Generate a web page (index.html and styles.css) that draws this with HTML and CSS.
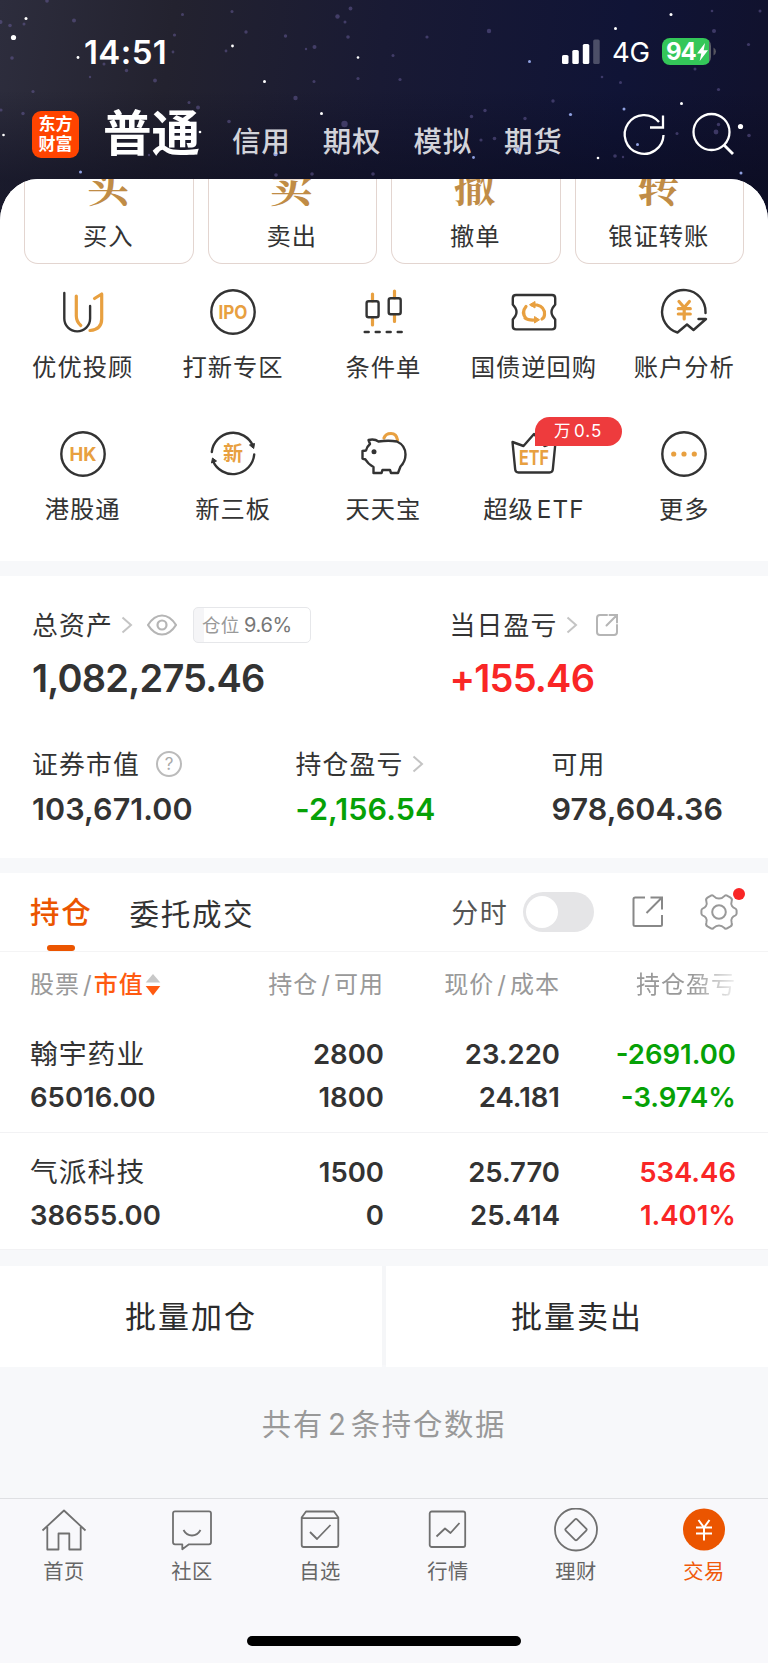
FILE: index.html
```html
<!DOCTYPE html>
<html lang="zh-CN">
<head>
<meta charset="utf-8">
<title>交易</title>
<link rel="stylesheet" href="styles.css">
</head>
<body>
<div class="screen">
  <header class="header">
    <svg class="stars" width="768" height="230" viewBox="0 0 768 230">
      <g fill="#fff">
        <circle cx="13.500" cy="37.500" r="2.600"/><circle cx="26" cy="18.500" r="1.500"/><circle cx="78" cy="57.500" r="1.400"/><circle cx="232.500" cy="46" r="1.400"/><circle cx="264.500" cy="81.500" r="1.500"/><circle cx="358" cy="57.500" r="1.300"/><circle cx="321.500" cy="113.500" r="1.500"/><circle cx="3.500" cy="135" r="1.300"/><circle cx="200" cy="132" r="1.300"/><circle cx="671" cy="14.500" r="1.500"/><circle cx="615.500" cy="28.500" r="1.500"/><circle cx="681.500" cy="103.500" r="1.500"/><circle cx="740.500" cy="126.500" r="2.600"/><circle cx="598" cy="158" r="1.300"/>
      </g>
      <g fill="#8fa0e0">
        <circle cx="80.500" cy="172" r="1.500"/><circle cx="529.500" cy="61.500" r="1.500"/><circle cx="570.500" cy="114.500" r="1.600"/><circle cx="624" cy="109" r="1.500"/><circle cx="637.500" cy="144.500" r="1.500"/><circle cx="473.500" cy="157.500" r="1.400"/><circle cx="741" cy="173" r="1.500"/><circle cx="275.500" cy="154" r="2.200"/><circle cx="518" cy="149" r="2.200"/>
      </g>
      <g fill="#6a5f9c" opacity=".5">
        <circle cx="0.500" cy="22" r="2"/><circle cx="10" cy="25.500" r="1.800"/><circle cx="24" cy="24" r="1.500"/><circle cx="47" cy="1" r="1.800"/><circle cx="74" cy="20.500" r="2"/><circle cx="12" cy="58" r="1.800"/><circle cx="104" cy="64" r="1.500"/><circle cx="126.500" cy="70.500" r="1.700"/><circle cx="155" cy="80.500" r="1.900"/><circle cx="90" cy="77" r="1.200"/><circle cx="33" cy="91.500" r="1.600"/><circle cx="174.500" cy="35" r="1.600"/><circle cx="173" cy="52" r="1.400"/><circle cx="182.500" cy="14.500" r="1.500"/><circle cx="246" cy="32" r="1.700"/><circle cx="232" cy="11.500" r="1.500"/><circle cx="285.500" cy="36" r="1.700"/><circle cx="314.500" cy="47" r="2"/><circle cx="306" cy="49" r="1.200"/><circle cx="226" cy="51" r="1.400"/><circle cx="337.500" cy="16.500" r="2.200"/><circle cx="345" cy="22" r="1.500"/><circle cx="350.500" cy="8.500" r="1.900"/><circle cx="348" cy="37" r="1.800"/><circle cx="358" cy="78.500" r="1.600"/><circle cx="314" cy="81.500" r="1.500"/><circle cx="295.500" cy="98" r="2.200"/><circle cx="344.500" cy="124" r="3.200"/><circle cx="198" cy="107.500" r="2"/><circle cx="189" cy="102.500" r="1.500"/><circle cx="229" cy="121.500" r="1.800"/><circle cx="23" cy="113.500" r="1.700"/><circle cx="1" cy="110" r="1.600"/><circle cx="427" cy="37" r="1.600"/><circle cx="489" cy="31" r="2.200"/><circle cx="393" cy="55.500" r="1.500"/><circle cx="400" cy="79.500" r="1.600"/><circle cx="553" cy="101" r="1.700"/><circle cx="485" cy="110.500" r="1.700"/><circle cx="471.500" cy="116.500" r="1.700"/><circle cx="525" cy="118.500" r="1.700"/><circle cx="481" cy="140" r="1.600"/><circle cx="494.500" cy="138.500" r="1.800"/><circle cx="714" cy="31" r="2"/><circle cx="748.500" cy="44.500" r="1.600"/><circle cx="712" cy="11" r="1.300"/><circle cx="695" cy="69" r="1.500"/><circle cx="718.500" cy="89.500" r="1.600"/><circle cx="620.500" cy="82.500" r="1.500"/><circle cx="602" cy="77" r="1.300"/><circle cx="718.500" cy="124.500" r="1.700"/><circle cx="716" cy="132" r="2.400"/><circle cx="749" cy="135.500" r="1.800"/><circle cx="677" cy="133.500" r="1.500"/><circle cx="615" cy="156" r="1.800"/><circle cx="623" cy="157" r="1.200"/><circle cx="276" cy="175" r="1.800"/><circle cx="312" cy="174" r="1.800"/><circle cx="373" cy="174" r="1.800"/><circle cx="149" cy="155" r="1.200"/><circle cx="760" cy="11" r="1.500"/>
      </g>
    </svg>
    <div class="status">
      <span class="clock">14:51</span>
      <svg class="signal" width="40" height="26" viewBox="0 0 40 26" fill="#fff">
        <rect x="2" y="16" width="6.500" height="9" rx="1.600"/><rect x="12.300" y="11" width="6.500" height="14" rx="1.600"/><rect x="22.800" y="5" width="6.500" height="20" rx="1.600"/><rect x="33.200" y="0.500" width="6.500" height="24.500" rx="1.600" opacity=".25"/>
      </svg>
      <span class="net">4G</span>
      <span class="battery"><b>94</b><svg width="13" height="20" viewBox="0 0 12 20"><path d="M8.500 1 0.500 11.500h4.300L3.200 19 11.500 8.200H7.200z" fill="#fff"/></svg></span>
      <svg class="nub" width="3" height="9" viewBox="0 0 3 9"><path d="M.5 0.500q2.500 1.500 2.500 4t-2.500 4z" fill="#55555f"/></svg>
    </div>
    <nav class="accounts">
      <div class="logo"><span>东方</span><span>财富</span></div>
      <span class="account current">普通</span>
      <span class="account">信用</span>
      <span class="account">期权</span>
      <span class="account">模拟</span>
      <span class="account">期货</span>
      <svg class="tools" width="120" height="48" viewBox="0 0 120 48" fill="none" stroke="#fff" stroke-width="2.300">
        <path d="M48.500 25a19.400 19.400 0 1 1-4.500-13M48 5.500v12H35"/>
        <circle cx="96.500" cy="22" r="18"/><path d="M109 35l9 9" stroke-width="2.800"/>
      </svg>
    </nav>
  </header>

  <main class="sheet">
    <section class="panel shortcuts">
      <div class="cards">
        <div class="card"><span class="seal">买</span><span class="label">买入</span></div>
        <div class="card"><span class="seal">卖</span><span class="label">卖出</span></div>
        <div class="card"><span class="seal">撤</span><span class="label">撤单</span></div>
        <div class="card"><span class="seal">转</span><span class="label">银证转账</span></div>
      </div>
      <div class="grid">
        <div class="cell">
          <svg class="ico" viewBox="0 0 50 50"><path class="k" d="M6.300 6v25.500a12.900 12.900 0 0 0 25.800 0V19"/><path class="g" d="M18.300 9v20q0 5.500 4.500 9.500M36.500 11.500L43.700 7v25q0 10.500-11.700 11.500"/></svg>
          <span class="label">优优投顾</span>
        </div>
        <div class="cell">
          <svg class="ico" viewBox="0 0 50 50"><circle class="k" cx="25" cy="25" r="21.700"/><text class="gt" x="25" y="31.800" font-size="19" textLength="29" lengthAdjust="spacingAndGlyphs">IPO</text></svg>
          <span class="label">打新专区</span>
        </div>
        <div class="cell">
          <svg class="ico" viewBox="0 0 50 50"><path class="g" d="M14.500 7v7M14.500 32v6M36.500 4v7M36.500 28v6.500"/><rect class="k" x="8.600" y="14.300" width="12" height="16" rx="2"/><rect class="k" x="30.700" y="11.300" width="12" height="16" rx="2"/><path class="k" d="M6.700 45h4M17.700 45h4M28.700 45h4M39.700 45h4"/></svg>
          <span class="label">条件单</span>
        </div>
        <div class="cell">
          <svg class="ico" viewBox="0 0 50 50"><path class="k" d="M7 8h36q3.200 0 3.200 3.200v6.300l-2.600 3.500q-2.200 4 0 8l2.600 3.500v6.700q0 3.200-3.200 3.200H7q-3.200 0-3.200-3.200v-6.700l2.600-3.500q2.200-4 0-8l-2.600-3.500v-6.300Q3.800 8 7 8z"/><path class="g" d="M17 31.500q-5-6 0-12M23 18h5q8 2 7.500 9.500 0 3-2.500 4.500M16 31q3 2.500 10 2"/><path fill="#e8a040" stroke="#e8a040" stroke-linejoin="round" d="M26 14.500v6.500l-5.500-3.300zM25.500 29.500v6.500l5-3.200z"/></svg>
          <span class="label">国债逆回购</span>
        </div>
        <div class="cell">
          <svg class="ico" viewBox="0 0 50 50"><path class="k" d="M46.500 26v-1A21.700 21.700 0 1 0 18.500 45.500l9.500-8 6.500 5.500 12.500-11h-7.500"/><path class="g" d="M20 14.500l5.200 6 5.200-6M25.200 20.500v11.500M19.300 21.700h12M19.300 27h12"/></svg>
          <span class="label">账户分析</span>
        </div>
        <div class="cell">
          <svg class="ico" viewBox="0 0 50 50"><circle class="k" cx="25" cy="25" r="21.700"/><text class="gt" x="25" y="31.800" font-size="19" textLength="27" lengthAdjust="spacingAndGlyphs">HK</text></svg>
          <span class="label">港股通</span>
        </div>
        <div class="cell">
          <svg class="ico" viewBox="0 0 50 50"><path class="k" d="M3.800 23A21.500 21.500 0 0 1 45 17M46.200 25.500A21.500 21.500 0 0 1 5 32"/><path fill="#333" stroke="#333" d="M41.500 16l5-1.500-.8 5zM8.500 32l-5 2 1-5z"/><text class="gt" x="25" y="32" font-size="20">新</text></svg>
          <span class="label">新三板</span>
        </div>
        <div class="cell">
          <svg class="ico" viewBox="0 0 50 50"><path class="g" d="M26 9q1.500-4.500 7-4.500T39.500 11"/><path class="k" d="M10.500 11q6-1.500 10 1.500 10-1.500 18.500 0 8.500 4 8.500 13 0 7-5 12l-2.500 6.500h-7l-1-3h-7.500l-1 3h-8v-6Q10 35 7.500 30.500l-3-1V22l3.500-.5q1-4 4-6.500z"/><circle cx="16" cy="22.800" r="2.500" fill="#333"/></svg>
          <span class="label">天天宝</span>
        </div>
        <div class="cell">
          <svg class="ico" viewBox="0 0 50 50"><path class="k" d="M3.500 13l11 4L25 5l10.500 12 11-4-2.700 27.500q-.3 3-3.300 3h-31q-3 0-3.300-3z"/><text class="gt" x="25" y="36" font-size="20" textLength="30" lengthAdjust="spacingAndGlyphs">ETF</text></svg>
          <span class="badge">万<i>0.5</i></span>
          <span class="label">超级<i class="latin">ETF</i></span>
        </div>
        <div class="cell">
          <svg class="ico" viewBox="0 0 50 50"><circle class="k" cx="25" cy="25" r="21.700"/><g fill="#e8a040"><circle cx="14.700" cy="25" r="2.600"/><circle cx="25" cy="25" r="2.600"/><circle cx="35.300" cy="25" r="2.600"/></g></svg>
          <span class="label">更多</span>
        </div>
      </div>
    </section>

    <section class="panel assets">
      <div class="totals">
        <div class="stat">
          <div class="stat-name"><span class="caption">总资产</span>
            <svg class="chev" width="12" height="18" viewBox="0 0 12 18"><path d="M1.500 1.500L10 9l-8.500 7.500"/></svg>
            <svg class="eye" width="30" height="22" viewBox="0 0 30 22"><path d="M1 11Q7 1.500 15 1.500T29 11Q23 20.500 15 20.500T1 11z"/><circle cx="15" cy="11" r="4.500"/></svg>
            <span class="ratio">仓位 <i>9.6%</i></span>
          </div>
          <div class="big">1,082,275.46</div>
        </div>
        <div class="stat">
          <div class="stat-name"><span class="caption">当日盈亏</span>
            <svg class="chev" width="12" height="18" viewBox="0 0 12 18"><path d="M1.500 1.500L10 9l-8.500 7.500"/></svg>
            <svg class="out" width="24" height="24" viewBox="0 0 24 24"><path d="M12 2H5Q2 2 2 5v14q0 3 3 3h14q3 0 3-3v-7M14.500 2H22v7.500M22 2L11.500 12.500"/></svg>
          </div>
          <div class="big up">+155.46</div>
        </div>
      </div>
      <div class="details">
        <div class="stat">
          <div class="stat-name"><span class="caption">证券市值</span><span class="help">?</span></div>
          <div class="mid">103,671.00</div>
        </div>
        <div class="stat">
          <div class="stat-name"><span class="caption">持仓盈亏</span><svg class="chev" width="12" height="18" viewBox="0 0 12 18"><path d="M1.500 1.500L10 9l-8.500 7.500"/></svg></div>
          <div class="mid down">-2,156.54</div>
        </div>
        <div class="stat">
          <div class="stat-name"><span class="caption">可用</span></div>
          <div class="mid">978,604.36</div>
        </div>
      </div>
    </section>

    <section class="panel positions">
      <div class="tabs">
        <span class="tab on">持仓</span>
        <span class="tab">委托成交</span>
        <span class="mode">分时</span>
        <span class="switch"></span>
        <svg class="export" width="32" height="32" viewBox="0 0 32 32"><path d="M13 1.500H3.200Q1.500 1.500 1.500 3v25.500q0 1.500 1.700 1.500h25.300q1.500 0 1.500-1.500V19M18.500 1.500H30v12M30 1.500L14.500 17"/></svg>
        <span class="gear">
          <svg width="38" height="38" viewBox="0 0 38 38"><path d="M10.500 2.800q2-1.300 3.500.6 2 2.200 5 2.200t5-2.200q1.500-1.900 3.500-.6l3 1.800q2 1.300 1.200 3.400-1 3 .3 5 1.200 1.800 3 2.400 1.600.6 1.600 2.100v3q0 1.500-1.600 2.100-1.800.6-3 2.400-1.300 2-.3 5 .8 2.100-1.200 3.400l-3 1.800q-2 1.300-3.500-.6-2-2.200-5-2.200t-5 2.200q-1.500 1.900-3.500.6l-3-1.800q-2-1.300-1.200-3.400 1-3-.3-5-1.200-1.800-3-2.400-1.600-.6-1.600-2.100v-3q0-1.500 1.600-2.100 1.800-.6 3-2.400 1.300-2 .3-5-.8-2.100 1.200-3.400z"/><circle cx="19" cy="19" r="6.800"/></svg>
          <i class="dot"></i>
        </span>
      </div>
      <div class="row head">
        <span class="sort">股票<i>/</i><em>市值</em><svg width="16" height="22" viewBox="0 0 16 22"><path d="M8 0l7.300 8.500H.7z" fill="#c8c8c8"/><path d="M8 21.500L.7 12h14.600z" fill="#ff5a10"/></svg></span>
        <span>持仓<i>/</i>可用</span>
        <span>现价<i>/</i>成本</span>
        <span class="fade">持仓盈亏</span>
      </div>
      <div class="row stock">
        <div><span class="name">翰宇药业</span><span>65016.00</span></div>
        <div><span>2800</span><span>1800</span></div>
        <div><span>23.220</span><span>24.181</span></div>
        <div class="down"><span>-2691.00</span><span>-3.974%</span></div>
      </div>
      <div class="row stock">
        <div><span class="name">气派科技</span><span>38655.00</span></div>
        <div><span>1500</span><span>0</span></div>
        <div><span>25.770</span><span>25.414</span></div>
        <div class="up"><span>534.46</span><span>1.401%</span></div>
      </div>
    </section>

    <div class="bulk"><span class="btn">批量加仓</span><span class="btn">批量卖出</span></div>
    <p class="count">共有<i>2</i>条持仓数据</p>
  </main>

  <footer class="tabbar">
    <div class="items">
      <div class="item"><svg viewBox="0 0 46 46"><path d="M1.500 22.500L23 2.500l21.500 20M6.300 19v22.500h11.200V25.500h10.800v16h11.400V19"/></svg><span>首页</span></div>
      <div class="item"><svg viewBox="0 0 46 46"><path d="M6 3.300h34q2 0 2 2v29q0 2-2 2H20l-6.700 5v-5H6q-2 0-2-2v-29q0-2 2-2zM14.500 22q3 5.500 8.500 5.500t8.500-5.500"/></svg><span>社区</span></div>
      <div class="item"><svg viewBox="0 0 46 46"><path d="M9 3.500h28l4.300 6v27.500q0 2-2 2H6.700q-2 0-2-2V9.500zM4.700 10.200h36.600M13 24l7 7 13.500-14"/></svg><span>自选</span></div>
      <div class="item"><svg viewBox="0 0 46 46"><rect x="4.700" y="3.500" width="35.500" height="35.500" rx="2"/><path d="M11.500 28.500l8.500-8 5.500 4.500 9-10"/></svg><span>行情</span></div>
      <div class="item"><svg viewBox="0 0 46 46"><circle cx="23" cy="21.500" r="21"/><path d="M22 11.400q1-1 2 0l9.200 9.200q1 1 0 2L24 31.800q-1 1-2 0l-9.200-9.200q-1-1 0-2z"/></svg><span>理财</span></div>
      <div class="item active"><svg viewBox="0 0 46 46"><circle cx="23" cy="21.500" r="21"/><path d="M17.500 12l5.500 7.500 5.500-7.500M23 19.500v13M15 19.500h16M15 25.500h16"/></svg><span>交易</span></div>
    </div>
    <div class="home"></div>
  </footer>
</div>
</body>
</html>
```
FILE: styles.css
```css
* { box-sizing: border-box; }
body { margin: 0; font-family: Inter, "Noto Sans CJK SC", sans-serif; color: #333; background: #f7f8fa; }
i, em { font-style: normal; }
.screen {
  width: 768px; height: 1663px; position: relative; display: flex; flex-direction: column; overflow: hidden;
  background: linear-gradient(180deg, transparent 0, transparent 90px, rgba(8, 9, 28, .5) 180px), linear-gradient(97deg, #2d2d3d 0, #23222f 18%, #191a34 40%, #101436 65%, #120f22 100%);
}
.header { height: 179px; flex: none; position: relative; color: #fff; }
.stars { position: absolute; left: 0; top: 0; }
.status { position: relative; height: 103px; display: flex; align-items: center; padding-left: 84px; }
.clock { font-size: 33px; font-weight: 600; width: 476px; letter-spacing: .4px; }
.signal { flex: none; }
.net { font-size: 27.500px; margin-left: 12px; width: 50px; letter-spacing: -.3px; }
.battery { width: 49px; height: 27px; border-radius: 8px; background: linear-gradient(90deg, #34c759 0, #34c759 47px, #5d6068 47px); display: flex; align-items: center; padding-left: 4px; font-size: 24px; }
.battery b { width: 30px; letter-spacing: -1px; }
.nub { margin-left: 2px; }
.accounts { position: relative; height: 62px; display: flex; align-items: center; padding-left: 32px; }
.logo { width: 47px; height: 47px; border-radius: 9px; background: #ff4400; display: flex; flex-direction: column; align-items: center; justify-content: center; font-size: 17px; font-weight: 700; line-height: 20px; }
.account { font-size: 28.500px; font-weight: 500; line-height: 40px; color: #d2d3da; letter-spacing: .800px; width: 90.700px; margin-top: 15px; }
.account.current { font-size: 48.500px; font-weight: 700; letter-spacing: 0; color: #fff; width: 129px; margin: 0 0 0 24px; line-height: 60px; }
.tools { margin-left: 20px; flex: none; }

.sheet { height: 1319px; flex: none; background: #f7f8fa; border-radius: 38px 38px 0 0 / 42px 42px 0 0; overflow: hidden; position: relative; }
.panel { background: #fff; }
.label { font-size: 24.300px; line-height: 30px; letter-spacing: 1px; white-space: nowrap; }
.latin { margin-left: 3px; }
.shortcuts { height: 382px; }
.cards { display: grid; grid-template-columns: repeat(4, 169.500px); column-gap: 14px; padding-left: 24px; }
.card { height: 84.500px; border: 1.500px solid #e3d5d0; border-top: 0; border-radius: 0 0 14px 14px; overflow: hidden; display: flex; flex-direction: column; align-items: center; }
.seal { font-family: "Noto Serif CJK SC", "Noto Sans CJK SC", serif; font-weight: 700; font-size: 42px; line-height: 42px; margin-top: -16px; margin-right: 2px; color: #c08c46; height: 42px; }
.card .label { margin-top: 16px; margin-right: 1px; }
.grid { display: grid; grid-template-columns: repeat(5, 150.400px); grid-auto-rows: 142px; padding: 23.500px 8px 0 7.500px; }
.cell { display: flex; flex-direction: column; align-items: center; position: relative; }
.ico { width: 50px; height: 50px; fill: none; }
.cell .label { margin-top: 15px; }
.k { stroke: #333; stroke-width: 2.400px; fill: none; stroke-linejoin: round; stroke-linecap: round; }
.g { stroke: #e8a040; stroke-width: 3.200px; fill: none; stroke-linejoin: round; stroke-linecap: round; }
.gt { fill: #e8a040; font-weight: 700; text-anchor: middle; }
.badge { position: absolute; left: 76px; top: -12px; width: 87px; height: 29px; border-radius: 15px 15px 15px 0; background: #ee3b3d; color: #fff; font-size: 16.500px; line-height: 29px; text-align: center; letter-spacing: .5px; }
.badge i { margin-left: 3px; letter-spacing: 1px; font-size: 17px; }

.assets { height: 282px; margin-top: 15px; padding: 28px 0 0 32px; }
.totals { display: grid; grid-template-columns: 417.500px 1fr; }
.details { display: grid; grid-template-columns: 263.500px 256px 1fr; margin-top: 42px; }
.stat-name { height: 42px; display: flex; align-items: center; font-size: 25.800px; letter-spacing: 1.200px; }
.caption { margin-top: -4px; }
.chev { fill: none; stroke: #c4c4c4; stroke-width: 2px; margin-left: 8px; }
.eye { fill: none; stroke: #b5b5b5; stroke-width: 2.200px; margin-left: 14px; }
.out { fill: none; stroke: #b5b5b5; stroke-width: 2px; stroke-linecap: round; margin-left: 17px; }
.ratio { margin-left: 16px; width: 118px; height: 36px; border: 1.500px solid #e6e7ea; border-radius: 5px; background: linear-gradient(90deg, #f5f5f7 10px, #fff 10px); font-size: 18.500px; line-height: 35px; letter-spacing: .3px; padding-left: 8px; color: #999; white-space: nowrap; }
.ratio i { color: #777; font-size: 20px; letter-spacing: -.4px; margin-left: -1px; }
.big { font-size: 38px; font-weight: 600; line-height: 46px; margin-top: 9px; letter-spacing: -.8px; }
.mid { font-size: 30.500px; font-weight: 600; line-height: 38px; margin-top: 5px; letter-spacing: .1px; }
.help { width: 26px; height: 26px; border: 2px solid #bbb; border-radius: 50%; margin-left: 16px; color: #aaa; font-size: 17px; line-height: 22px; text-align: center; letter-spacing: 0; }
.up { color: #f92626; }
.down { color: #06a106; }

.positions { height: 377px; margin-top: 15px; border-bottom: 1px solid #f2f2f4; }
.tabs { height: 79px; border-bottom: 1.500px solid #f4f4f5; display: flex; align-items: center; padding-left: 30px; font-size: 29.500px; letter-spacing: 1.700px; }
.tab { margin-top: -1px; }
.tab.on { color: #eb5500; font-weight: 500; position: relative; width: 99.500px; height: 78px; line-height: 79px; margin-top: 0; }
.tab.on::after { content: ""; position: absolute; left: 17px; bottom: 0; width: 28px; height: 6px; border-radius: 3px; background: #eb5500; }
.mode { margin-left: 197px; font-size: 27px; color: #555; width: 72px; letter-spacing: 1.500px; margin-top: -1px; }
.switch { width: 71px; height: 40px; border-radius: 20px; background: #e5e5e7; padding: 4px 3px; }
.switch::before { content: ""; display: block; width: 32px; height: 32px; border-radius: 50%; background: #fff; }
.export { fill: none; stroke: #888; stroke-width: 2px; margin-left: 37.500px; }
.gear { position: relative; width: 38px; height: 38px; margin-left: 36px; }
.gear svg { display: block; fill: none; stroke: #999; stroke-width: 2px; }
.dot { position: absolute; right: -7px; top: -5px; width: 12px; height: 12px; border-radius: 50%; background: #f92626; }
.row { display: grid; grid-template-columns: 177px 177px 176px 176px; padding-left: 30px; text-align: right; }
.row > :first-child { text-align: left; }
.head { height: 63px; line-height: 65px; font-size: 24px; letter-spacing: 1px; color: #999; }
.head span i { margin: 0 3px 0 3px; }
.head em { color: #ff5a10; font-weight: 500; }
.head .sort i { margin: 0 1px 0 3px; }
.sort { white-space: nowrap; }
.sort svg { margin-left: 1px; vertical-align: -3px; }
.fade { -webkit-mask-image: linear-gradient(90deg, #000 75%, rgba(0, 0, 0, .15) 100%); mask-image: linear-gradient(90deg, #000 75%, rgba(0, 0, 0, .15) 100%); }
.stock { height: 117px; padding-top: 18px; font-size: 27.500px; font-weight: 600; line-height: 42.500px; }
.stock + .stock { border-top: 1px solid #f2f2f4; }
.stock span { display: block; }
.stock .name { font-weight: 400; font-size: 27.800px; letter-spacing: 1px; }

.bulk { margin-top: 16px; height: 99px; display: grid; grid-template-columns: 382px 382px; column-gap: 4px; background: #f5f6f8; }
.btn { background: #fff; text-align: center; line-height: 101px; font-size: 31px; letter-spacing: 2px; color: #2b2b2b; }
.count { margin: 0; height: 118px; line-height: 120px; text-align: center; color: #999; font-size: 29.300px; letter-spacing: 1.800px; }
.count i { margin: 0 3px 0 4px; }

.tabbar { height: 165px; flex: none; background: #f8f8fb; border-top: 1.500px solid #dfe0e3; }
.items { display: grid; grid-template-columns: repeat(6, 128px); height: 137px; padding-top: 9px; }
.item { display: flex; flex-direction: column; align-items: center; font-size: 20.300px; letter-spacing: .5px; color: #666; }
.item svg { width: 46px; height: 46px; fill: none; stroke: #707070; stroke-width: 1.800px; stroke-linejoin: round; }
.item span { line-height: 28px; margin-top: 4px; }
.item.active { color: #f05a0a; }
.item.active circle { fill: #eb5500; stroke: none; }
.item.active path { stroke: #fff; stroke-width: 2px; }
.home { width: 274px; height: 10px; border-radius: 5px; background: #000; margin: 0 auto; }
```
